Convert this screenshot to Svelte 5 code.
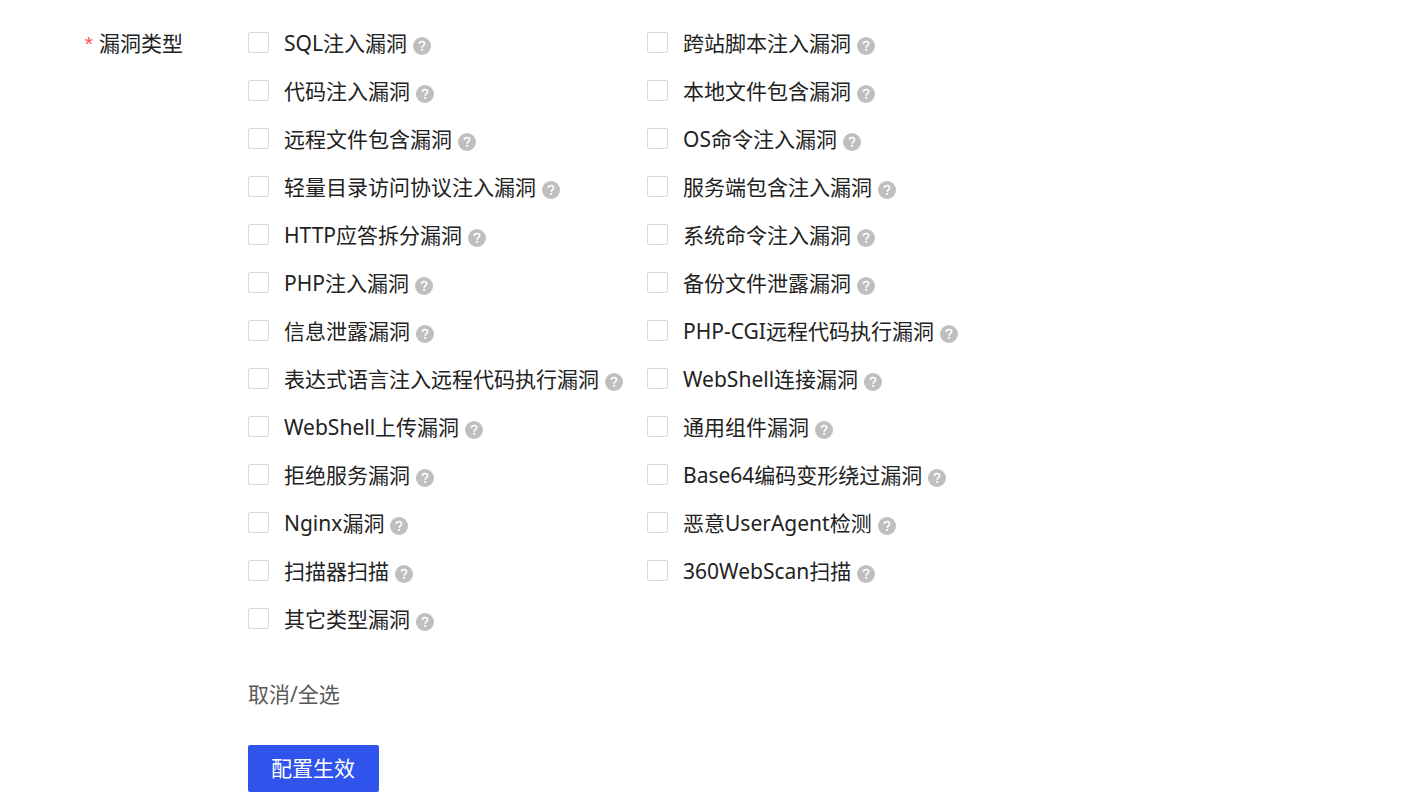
<script lang="ts">
	type Option = { value: string; label: string; checked: boolean };

	const names = [
		'SQL注入漏洞',
		'跨站脚本注入漏洞',
		'代码注入漏洞',
		'本地文件包含漏洞',
		'远程文件包含漏洞',
		'OS命令注入漏洞',
		'轻量目录访问协议注入漏洞',
		'服务端包含注入漏洞',
		'HTTP应答拆分漏洞',
		'系统命令注入漏洞',
		'PHP注入漏洞',
		'备份文件泄露漏洞',
		'信息泄露漏洞',
		'PHP-CGI远程代码执行漏洞',
		'表达式语言注入远程代码执行漏洞',
		'WebShell连接漏洞',
		'WebShell上传漏洞',
		'通用组件漏洞',
		'拒绝服务漏洞',
		'Base64编码变形绕过漏洞',
		'Nginx漏洞',
		'恶意UserAgent检测',
		'扫描器扫描',
		'360WebScan扫描',
		'其它类型漏洞'
	];

	let options: Option[] = $state(
		names.map((label, i) => ({ value: `type-${i}`, label, checked: false }))
	);

	function toggleAll() {
		const next = !options.every((o) => o.checked);
		options.forEach((o) => (o.checked = next));
	}
</script>

<form class="form" onsubmit={(e) => e.preventDefault()}>
	<div class="form-label" id="types-label"><span class="required">*</span>漏洞类型</div>
	<div class="form-content">
		<div class="options" role="group" aria-labelledby="types-label">
			{#each options as option (option.value)}
				<div class="option">
					<input type="checkbox" id={option.value} bind:checked={option.checked} />
					<label for={option.value}>{option.label}</label>
					<svg class="help" viewBox="0 0 18 18" aria-hidden="true">
						<circle cx="9" cy="9" r="9" fill="#bfbfbf" />
						<path
							d="M6.4 7.1C6.4 5.4 7.5 4.5 9 4.5s2.6.9 2.6 2.3c0 1.9-2.5 1.9-2.5 3.9"
							fill="none"
							stroke="#fff"
							stroke-width="1.6"
						/>
						<circle cx="9.1" cy="12.9" r="1.1" fill="#fff" />
					</svg>
				</div>
			{/each}
		</div>
		<button type="button" class="toggle" onclick={toggleAll}>取消/全选</button>
		<button type="submit" class="submit">配置生效</button>
	</div>
</form>

<style>
	:global(body) {
		background: #fff;
	}

	.form {
		display: flex;
		gap: 65px;
		padding: 19px 24px 15px 0;
		color: #222;
		font-family: 'Noto Sans', 'Noto Sans CJK SC', sans-serif;
		font-size: 21px;
		line-height: 48px;
	}

	.form-label {
		flex: 0 0 183px;
		text-align: right;
	}

	.required {
		margin-right: 6px;
		color: #ff4d4f;
		font-family: 'Liberation Sans', sans-serif;
	}

	.form-content {
		flex: 1;
		display: flex;
		flex-direction: column;
		align-items: flex-start;
	}

	.options {
		display: grid;
		grid-template-columns: 1fr 1fr;
		width: 100%;
		max-width: 798px;
	}

	.option {
		display: flex;
		align-items: center;
		white-space: nowrap;
	}

	input {
		appearance: none;
		flex: none;
		box-sizing: border-box;
		width: 21px;
		height: 21px;
		margin: 0 15px 2px 0;
		border: 1px solid #d9d9d9;
		border-radius: 2px;
		background: #fff;
	}

	input:checked {
		border-color: #2f54eb;
		background: #2f54eb;
		box-shadow: inset 0 0 0 4px #fff;
	}

	.help {
		flex: none;
		width: 18px;
		height: 18px;
		margin: 6px 0 0 6px;
	}

	button {
		border: none;
		font: inherit;
		cursor: pointer;
	}

	.toggle {
		margin-top: 27px;
		padding: 0;
		background: none;
		color: #595959;
	}

	.submit {
		margin-top: 27px;
		padding: 0 24px 0 23px;
		border-radius: 2px;
		background: #2f54eb;
		color: #fff;
		line-height: 47px;
	}
</style>
